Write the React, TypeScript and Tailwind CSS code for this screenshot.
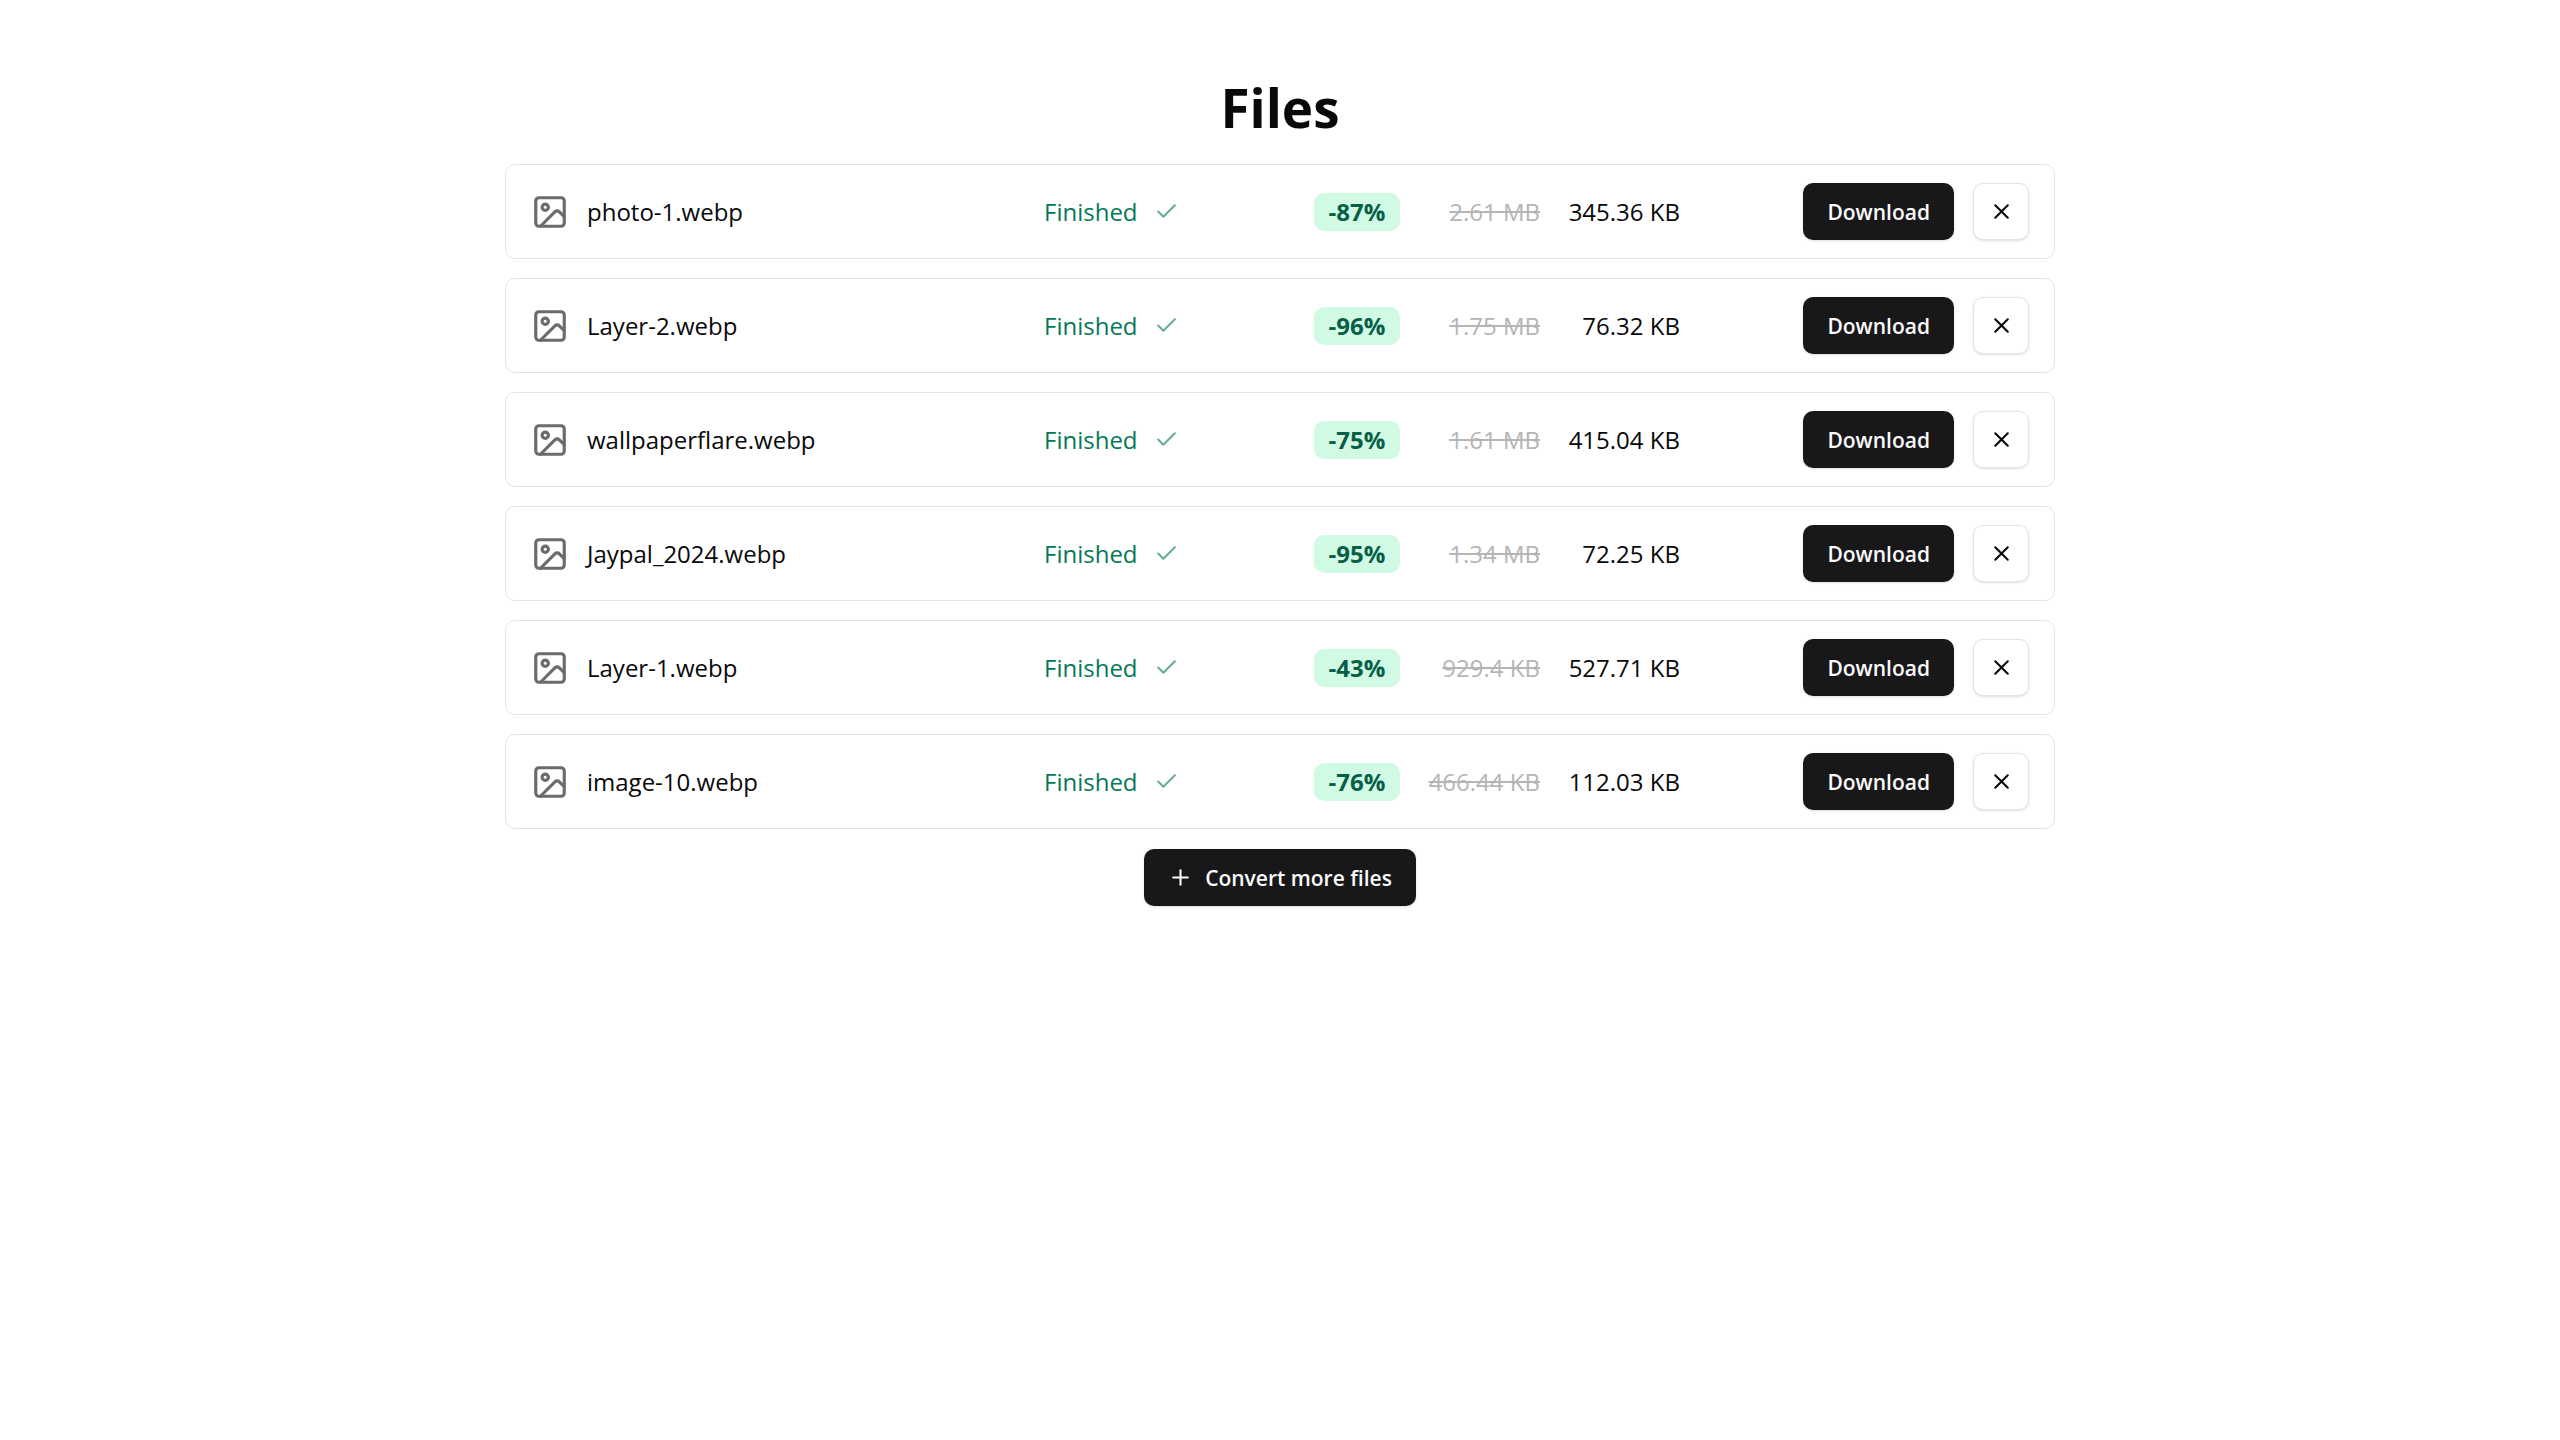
import { Check, Image, Plus, X } from "lucide-react";

type ConvertedFile = {
  name: string;
  saved: string;
  before: string;
  after: string;
};

const files: ConvertedFile[] = [
  { name: "photo-1.webp", saved: "-87%", before: "2.61 MB", after: "345.36 KB" },
  { name: "Layer-2.webp", saved: "-96%", before: "1.75 MB", after: "76.32 KB" },
  { name: "wallpaperflare.webp", saved: "-75%", before: "1.61 MB", after: "415.04 KB" },
  { name: "Jaypal_2024.webp", saved: "-95%", before: "1.34 MB", after: "72.25 KB" },
  { name: "Layer-1.webp", saved: "-43%", before: "929.4 KB", after: "527.71 KB" },
  { name: "image-10.webp", saved: "-76%", before: "466.44 KB", after: "112.03 KB" },
];

function FileRow({ file }: { file: ConvertedFile }) {
  return (
    <li className="grid grid-cols-[513fr_270fr_86fr_140fr_140fr_349fr] items-center rounded-[10px] border border-[#e4e4e7] px-[25px] py-[18px]">
      <div className="flex items-center gap-[18px]">
        <Image size={38} strokeWidth={2} className="shrink-0 text-[#6b6b6d]" aria-hidden="true" />
        <span className="whitespace-nowrap">{file.name}</span>
      </div>
      <div className="flex items-center gap-4 text-[#047857]">
        <span>Finished</span>
        <Check size={25} strokeWidth={2} className="opacity-60" aria-hidden="true" />
      </div>
      <span className="rounded-[10px] bg-[#d1fae5] text-center leading-[38px] font-bold text-[#065f46]">
        {file.saved}
      </span>
      <s className="text-right whitespace-nowrap text-[#b5b5b6]">{file.before}</s>
      <span className="text-right whitespace-nowrap">{file.after}</span>
      <div className="flex justify-end gap-[19px]">
        <button
          type="button"
          className="h-[57px] rounded-[10px] bg-[#18181b] px-6 text-[21px] font-semibold text-[#fafafa] shadow"
        >
          Download
        </button>
        <button
          type="button"
          aria-label={`Remove ${file.name}`}
          className="flex h-[57px] w-14 items-center justify-center rounded-[10px] border border-[#e4e4e7] bg-white shadow-sm"
        >
          <X size={25} strokeWidth={2} aria-hidden="true" />
        </button>
      </div>
    </li>
  );
}

export default function App() {
  return (
    <main className="min-h-screen bg-white px-6 pt-[76px] font-['Open_Sans','Noto_Sans',sans-serif] text-[24px] leading-[38px] text-[#09090b]">
      <div className="mx-auto flex w-full max-w-[1550px] flex-col items-center">
        <h1 className="text-[53px] leading-[64px] font-bold">Files</h1>
        <ul className="mt-6 flex w-full flex-col gap-[19px]">
          {files.map((file) => (
            <FileRow key={file.name} file={file} />
          ))}
        </ul>
        <button
          type="button"
          className="mt-5 flex h-[57px] items-center gap-3 rounded-[10px] bg-[#18181b] px-6 text-[21px] font-semibold text-[#fafafa] shadow"
        >
          <Plus size={25} strokeWidth={2} aria-hidden="true" />
          Convert more files
        </button>
      </div>
    </main>
  );
}
